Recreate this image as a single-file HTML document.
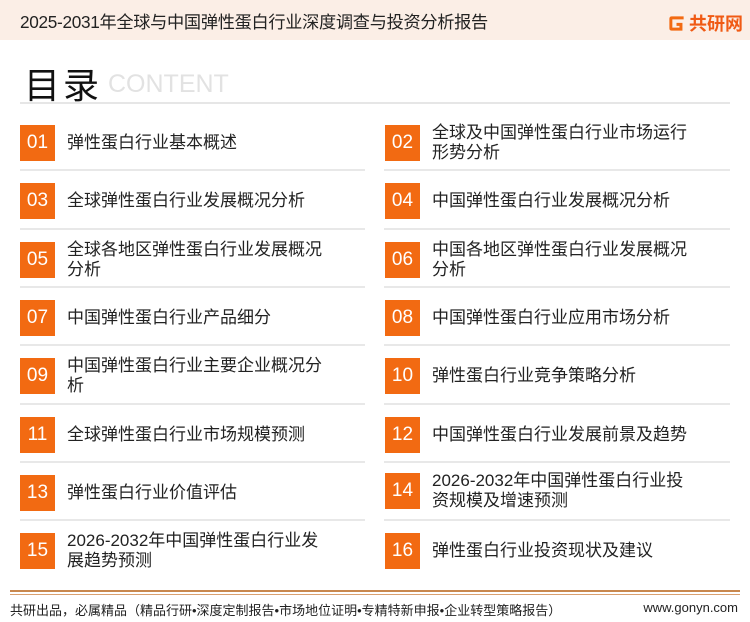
<!DOCTYPE html>
<html><head><meta charset="utf-8"><style>
*{margin:0;padding:0;box-sizing:border-box}
body{width:750px;height:622px;background:#fff;position:relative;overflow:hidden;font-family:"Liberation Sans","Noto Sans CJK SC",sans-serif;color:#222}
.hdr{position:absolute;left:0;top:0;width:750px;height:40px;background:#fbeee6}
.ttl{position:absolute;left:20px;top:8px;font-size:17.2px;color:#222;letter-spacing:-0.3px}
.logo{position:absolute;left:667px;top:10px;display:flex;align-items:center;gap:3px}
.logo span{font-size:18px;font-weight:bold;color:#f05a14}
.big{position:absolute;left:24px;top:57px;font-size:36px;color:#111;letter-spacing:3px}
.cont{position:absolute;left:108px;top:70px;font-size:25px;color:#e2e2e2}
.hl{position:absolute;left:20px;top:102px;width:710px;height:2px;background:#e6e6e6}
.box{position:absolute;width:35px;height:36px;background:#f26a12;color:#fff;font-size:19px;text-align:center;line-height:36px}
.txt{position:absolute;font-size:17px;line-height:20px;width:262px;display:flex;align-items:center;height:40px}
.sep{position:absolute;height:2px;background:#e8e8e8}
.fl1{position:absolute;left:10px;top:590px;width:730px;height:2px;background:#c8874e}
.fl2{position:absolute;left:10px;top:594px;width:730px;height:1px;background:#d9a070}
.ft{position:absolute;left:10px;top:600px;font-size:13px;color:#222}
.fr{position:absolute;right:12px;top:600px;font-size:13px;color:#222}
</style></head><body>
<div class="hdr"></div>
<div class="ttl">2025-2031年全球与中国弹性蛋白行业深度调查与投资分析报告</div>
<div class="logo"><svg width="19" height="19" viewBox="0 0 16 16"><path d="M14 2H4Q2 2 2 4V12Q2 14 4 14H13V7.5H8V10H10.5V11.5H4.5V4.5H14Z" fill="#f26a12"/></svg><span>共研网</span></div>
<div class="big">目录</div>
<div class="cont">CONTENT</div>
<div class="hl"></div>

<div class="box" style="left:20px;top:125px">01</div><div class="txt" style="left:67px;top:123px">弹性蛋白行业基本概述</div><div class="sep" style="left:20px;top:169px;width:345px"></div>
<div class="box" style="left:385px;top:125px">02</div><div class="txt" style="left:432px;top:123px">全球及中国弹性蛋白行业市场运行形势分析</div><div class="sep" style="left:384px;top:169px;width:346px"></div>

<div class="box" style="left:20px;top:183px">03</div><div class="txt" style="left:67px;top:181px">全球弹性蛋白行业发展概况分析</div><div class="sep" style="left:20px;top:228px;width:345px"></div>
<div class="box" style="left:385px;top:183px">04</div><div class="txt" style="left:432px;top:181px">中国弹性蛋白行业发展概况分析</div><div class="sep" style="left:384px;top:228px;width:346px"></div>

<div class="box" style="left:20px;top:242px">05</div><div class="txt" style="left:67px;top:240px">全球各地区弹性蛋白行业发展概况分析</div><div class="sep" style="left:20px;top:286px;width:345px"></div>
<div class="box" style="left:385px;top:242px">06</div><div class="txt" style="left:432px;top:240px">中国各地区弹性蛋白行业发展概况分析</div><div class="sep" style="left:384px;top:286px;width:346px"></div>

<div class="box" style="left:20px;top:300px">07</div><div class="txt" style="left:67px;top:298px">中国弹性蛋白行业产品细分</div><div class="sep" style="left:20px;top:344px;width:345px"></div>
<div class="box" style="left:385px;top:300px">08</div><div class="txt" style="left:432px;top:298px">中国弹性蛋白行业应用市场分析</div><div class="sep" style="left:384px;top:344px;width:346px"></div>

<div class="box" style="left:20px;top:358px">09</div><div class="txt" style="left:67px;top:356px">中国弹性蛋白行业主要企业概况分析</div><div class="sep" style="left:20px;top:403px;width:345px"></div>
<div class="box" style="left:385px;top:358px">10</div><div class="txt" style="left:432px;top:356px">弹性蛋白行业竞争策略分析</div><div class="sep" style="left:384px;top:403px;width:346px"></div>

<div class="box" style="left:20px;top:417px">11</div><div class="txt" style="left:67px;top:415px">全球弹性蛋白行业市场规模预测</div><div class="sep" style="left:20px;top:461px;width:345px"></div>
<div class="box" style="left:385px;top:417px">12</div><div class="txt" style="left:432px;top:415px">中国弹性蛋白行业发展前景及趋势</div><div class="sep" style="left:384px;top:461px;width:346px"></div>

<div class="box" style="left:20px;top:475px">13</div><div class="txt" style="left:67px;top:473px">弹性蛋白行业价值评估</div><div class="sep" style="left:20px;top:519px;width:345px"></div>
<div class="box" style="left:385px;top:473px">14</div><div class="txt" style="left:432px;top:471px">2026-2032年中国弹性蛋白行业投资规模及增速预测</div><div class="sep" style="left:384px;top:519px;width:346px"></div>

<div class="box" style="left:20px;top:533px">15</div><div class="txt" style="left:67px;top:531px">2026-2032年中国弹性蛋白行业发展趋势预测</div>
<div class="box" style="left:385px;top:533px">16</div><div class="txt" style="left:432px;top:531px">弹性蛋白行业投资现状及建议</div>

<div class="fl1"></div><div class="fl2"></div>
<div class="ft">共研出品，必属精品（精品行研•深度定制报告•市场地位证明•专精特新申报•企业转型策略报告）</div>
<div class="fr">www.gonyn.com</div>
</body></html>
